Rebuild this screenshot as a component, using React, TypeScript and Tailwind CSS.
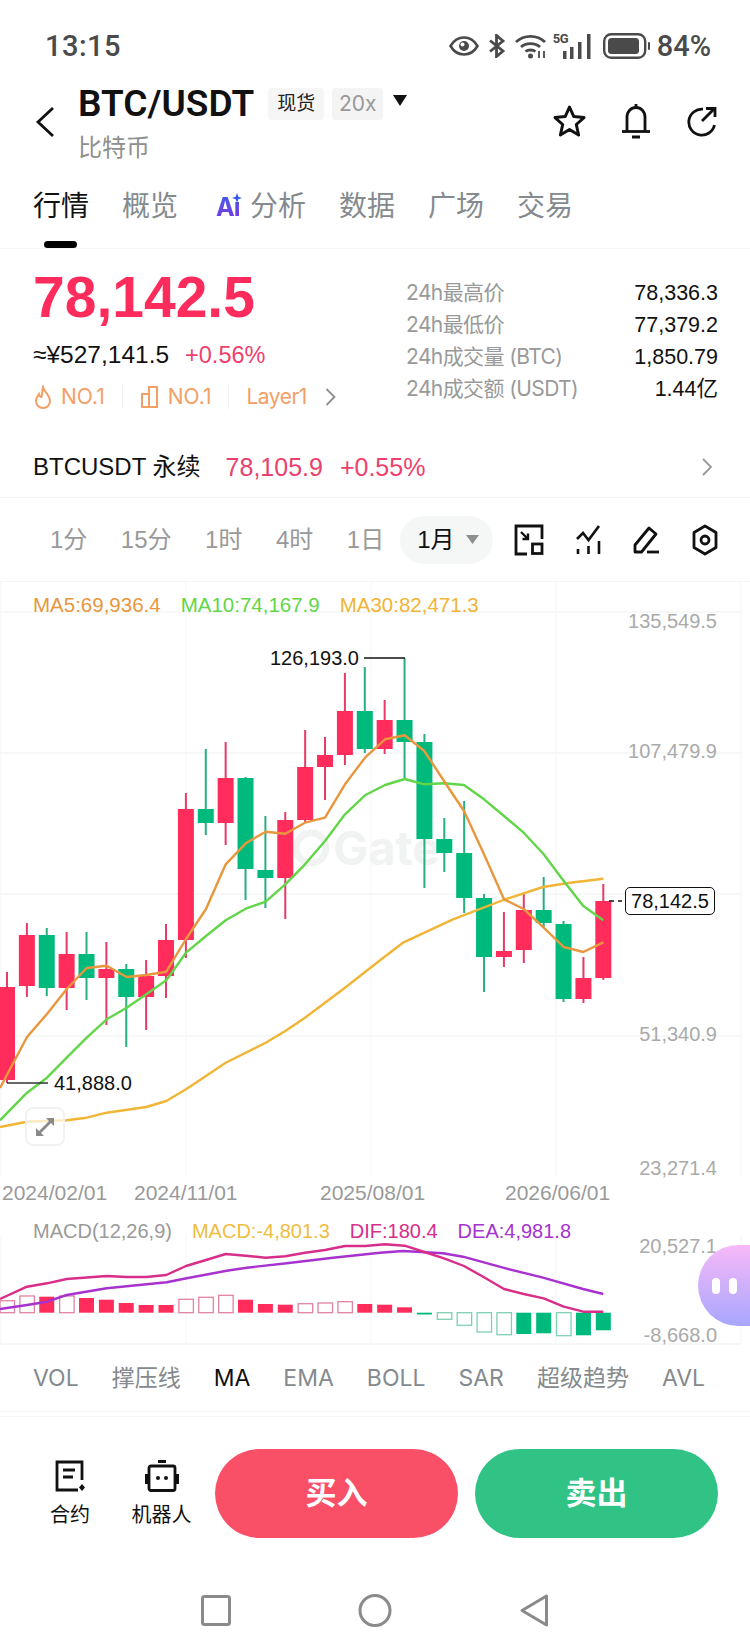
import React from 'react';

const RED = '#ff2c5c';
const GREEN = '#00b97c';

// [wickTop, bodyTop, bodyBottom, wickBottom, isGreen], read off in page pixels
const candles: [number, number, number, number, number][] = [
  [971, 986, 1079, 1082, 0],
  [922, 934, 985, 996, 0],
  [927, 934, 987, 995, 1],
  [931, 953, 987, 1009, 0],
  [931, 953, 977, 999, 1],
  [941, 968, 977, 1024, 0],
  [963, 968, 996, 1046, 1],
  [959, 975, 996, 1029, 0],
  [923, 939, 975, 997, 0],
  [792, 808, 939, 957, 0],
  [748, 808, 822, 834, 1],
  [741, 777, 822, 844, 0],
  [776, 777, 868, 899, 1],
  [815, 869, 877, 907, 1],
  [811, 819, 877, 918, 0],
  [729, 766, 819, 822, 0],
  [736, 754, 766, 799, 0],
  [672, 710, 754, 764, 0],
  [666, 710, 748, 752, 1],
  [699, 719, 748, 753, 0],
  [657, 719, 741, 777, 1],
  [733, 741, 838, 887, 1],
  [817, 838, 852, 871, 1],
  [800, 852, 897, 912, 1],
  [893, 897, 956, 991, 1],
  [911, 950, 956, 966, 0],
  [893, 909, 949, 962, 0],
  [876, 909, 922, 926, 1],
  [920, 923, 998, 1001, 1],
  [956, 977, 998, 1002, 0],
  [883, 900, 977, 979, 0],
];

const candleX = (i: number) => 7 + i * 19.877;

const ma5 = '0,1087 27,1036 47,1013 66.7,988 86.7,967 106.7,964.7 126.7,976 146.3,974 166.3,970.7 186,938 206,908 225.7,863.3 245.7,842.3 265.7,830.7 285.3,832.7 305,821.7 325,816.7 345,783.3 365,756.7 385,738.3 404.7,734.3 424.3,750 444,780 464,810 484,853.3 504,898.3 523.7,908 543.7,926.7 563.7,946 583.3,951 603.3,941.3';
const ma10 = '0,1119.3 27,1091.7 47,1076.7 66.7,1056.7 86.7,1036.7 106.7,1018.3 126.7,1006.7 146.3,993.3 166.3,979.3 186,951.7 206,935 225.7,919.3 245.7,907.7 265.7,900.7 285.3,883.3 305,863.3 325,840 345,813.3 365,794.3 385,784 404.7,778 424.3,783.3 444,782.3 464,784 484,798.3 504,815 523.7,831.7 543.7,853.3 563.7,880 583.3,905 603.3,919.3';
const ma30 = '0,1126 27,1120.7 66.7,1119.3 86.7,1116.7 106.7,1111.7 146.3,1106 166.3,1100 186,1088.3 206,1075 225.7,1061.7 265.7,1041.7 285.3,1030 305,1016.7 325,1001.7 345,986.7 380,959.3 403,941.7 453,918.3 503.3,899 543,886 570,881.7 603.3,877.7';
const dif = '0,1299 27,1286.7 47,1283.3 66.7,1279 106.7,1276 126.7,1277 146.3,1277 166.3,1275 186,1266 206,1260 225.7,1254 245.7,1255.7 265.7,1257.7 285.3,1256.3 305,1252.7 325,1250 345,1246 365,1246 385,1244.3 404.7,1245.7 424.3,1252 444,1258.3 464,1266 484,1277.3 504,1289 523.7,1294 543.7,1298.3 563.7,1306.7 583.3,1311.7 603.3,1311.7';
const dea = '0,1309 27,1305 47,1301.7 66.7,1295 106.7,1288.3 166.7,1282.3 186.7,1278.3 226.7,1270.7 246.7,1267.7 286.7,1263.3 333,1257.7 380,1252.7 403,1251 443,1253.3 463,1256.7 503,1267.7 543,1277.7 583,1289 603.3,1294';

// [edge y, filled] - the other edge is always the zero line
const macdBars: [number, number][] = [
  [1300.7, 0], [1296, 0], [1296.7, 1], [1296, 0], [1298, 1], [1299.7, 1], [1303, 1], [1305, 1], [1305, 1],
  [1299.3, 0], [1297.3, 0], [1295.3, 0], [1299.7, 1], [1304, 1], [1304.7, 1], [1303.7, 0], [1303, 0], [1301.7, 0],
  [1304, 1], [1304.7, 1], [1307.3, 1], [1314.5, 1], [1319.3, 0], [1325.3, 0], [1332, 0], [1334.7, 0], [1334, 1],
  [1333.3, 1], [1335.7, 0], [1335.3, 1], [1330.3, 1],
];
const ZERO = 1312.7;

function MainChart() {
  return (
    <svg className="absolute inset-0 w-[750px] h-[595px]" viewBox="0 581 750 595">
      {[611, 752, 893, 1035].map((y) => (
        <line key={y} x1="0" x2="741" y1={y} y2={y} stroke="#f3f4f5" strokeWidth="1.5" />
      ))}
      {[1, 186, 371, 556, 741].map((x) => (
        <line key={x} x1={x} x2={x} y1="581" y2="1176" stroke="#f5f6f7" strokeWidth="1.2" />
      ))}
      {/* watermark */}
      <circle cx="311" cy="847" r="15" fill="none" stroke="#f1f3f3" strokeWidth="7" />
      <text x="333" y="864" fontSize="47" fontWeight="700" fill="#f1f3f3" fontFamily="Inter, sans-serif">Gate</text>
      {candles.map(([wt, bt, bb, wb, g], i) => (
        <g key={i} fill={g ? GREEN : RED}>
          <rect x={candleX(i) - 1} y={wt} width="2" height={wb - wt} fill={g ? '#27b07f' : '#e83a66'} />
          <rect x={candleX(i) - 8} y={bt} width="16" height={bb - bt} />
        </g>
      ))}
      <polyline points={ma30} fill="none" stroke="#f0b536" strokeWidth="2.4" strokeLinejoin="round" />
      <polyline points={ma10} fill="none" stroke="#62d648" strokeWidth="2.4" strokeLinejoin="round" />
      <polyline points={ma5} fill="none" stroke="#e8973d" strokeWidth="2.4" strokeLinejoin="round" />
      <path d="M364 657H405" stroke="#111" strokeWidth="1.5" />
      <path d="M7 1082H48" stroke="#333" strokeWidth="1.5" />
      <path d="M609 900H622" stroke="#111" strokeWidth="1.5" strokeDasharray="5 4" />
    </svg>
  );
}

function MacdChart() {
  return (
    <svg className="absolute inset-0 w-[750px] h-[134px]" viewBox="0 1211 750 134">
      <line x1="0" x2="741" y1="1344" y2="1344" stroke="#f3f4f5" strokeWidth="1.5" />
      {[1, 186, 371, 556, 741].map((x) => (
        <line key={x} x1={x} x2={x} y1="1236" y2="1344" stroke="#f5f6f7" strokeWidth="1.2" />
      ))}
      {macdBars.map(([y, filled], i) => {
        const up = y < ZERO;
        const color = up ? RED : GREEN;
        const top = Math.min(y, ZERO);
        const h = Math.abs(y - ZERO);
        if (filled) return <rect key={i} x={candleX(i) - 7.5} y={top} width="15" height={h} fill={color} />;
        return (
          <rect key={i} x={candleX(i) - 7} y={top} width="14.5" height={h} fill="white" stroke={up ? '#e283a0' : '#7fd0b2'} strokeWidth="1.3" />
        );
      })}
      <polyline points={dea} fill="none" stroke="#a832cf" strokeWidth="2.4" strokeLinejoin="round" />
      <polyline points={dif} fill="none" stroke="#d82e8a" strokeWidth="2.4" strokeLinejoin="round" />
    </svg>
  );
}

function StatusIcons() {
  return (
    <div className="flex items-center text-[#4a4a4a]">
      {/* eye */}
      <svg width="30" height="20" viewBox="0 0 30 20" fill="none" stroke="currentColor" strokeWidth="2.6">
        <path d="M1.5 10C5 4 9.5 1.5 15 1.5S25 4 28.5 10C25 16 20.5 18.5 15 18.5S5 16 1.5 10Z" />
        <circle cx="15" cy="10" r="5" fill="currentColor" stroke="none" />
        <circle cx="13.5" cy="8.5" r="2" fill="white" stroke="none" />
      </svg>
      {/* bluetooth */}
      <svg className="ml-[9px]" width="18" height="24" viewBox="0 0 18 24" fill="none" stroke="currentColor" strokeWidth="2.8">
        <path d="M2 6.5L15 17L8.5 22.5V1.5L15 7L2 17.5" />
      </svg>
      {/* wifi */}
      <svg className="ml-[9px]" width="31" height="25" viewBox="0 0 31 25" fill="none" stroke="currentColor" strokeWidth="2.8">
        <path d="M1 8C9 0.5 22 0.5 30 8" />
        <path d="M6 13C11 8.5 20 8.5 25 13" />
        <path d="M10.5 17.5C13 15.5 18 15.5 20.5 17.5" />
        <circle cx="15.5" cy="22" r="2.5" fill="currentColor" stroke="none" />
        <path d="M24 17V24M29 17V24" strokeWidth="1.8" />
      </svg>
      {/* 5G + signal */}
      <div className="relative ml-[7px] w-[40px] h-[25px]">
        <span className="absolute left-0 top-[-2px] text-[13px] leading-[14px] font-bold font-['Roboto',sans-serif] tracking-[-0.5px]">5G</span>
        <svg className="absolute inset-0" width="40" height="25" viewBox="0 0 40 25" fill="currentColor">
          <rect x="10" y="17" width="3.5" height="8" />
          <rect x="17" y="13" width="3.5" height="12" />
          <rect x="25" y="8" width="3.5" height="17" />
          <rect x="34" y="0" width="3.5" height="25" />
        </svg>
      </div>
      {/* battery */}
      <svg className="ml-[10px]" width="47" height="26" viewBox="0 0 47 26" fill="none">
        <rect x="1.2" y="1.2" width="41" height="23.6" rx="7" stroke="currentColor" strokeWidth="2.4" />
        <rect x="5" y="5" width="31" height="16" rx="3.5" fill="currentColor" />
        <rect x="45" y="9" width="2" height="8" rx="1" fill="currentColor" />
      </svg>
      <span className="ml-[7px] text-[29px] leading-[32px] font-medium font-['Roboto',sans-serif]">84%</span>
    </div>
  );
}

function AiIcon() {
  return (
    <span className="relative w-[26px] h-[26px]">
      <span className="absolute left-0 bottom-[-2px] text-[25px] leading-[28px] font-bold bg-gradient-to-b from-[#2f5bea] to-[#7c2fe0] bg-clip-text text-transparent tracking-[-1px]">Aı</span>
      <svg className="absolute right-0 top-0" width="10" height="10" viewBox="0 0 10 10" fill="#2f5bea">
        <path d="M5 0L6.3 3.7L10 5L6.3 6.3L5 10L3.7 6.3L0 5L3.7 3.7Z" />
      </svg>
    </span>
  );
}

export default function App() {
  return (
    <div className="relative w-[750px] h-[1650px] overflow-hidden bg-white text-[#111] font-['Inter','Noto_Sans_CJK_SC',sans-serif]">
      {/* status bar */}
      <div className="flex items-center justify-between h-[84px] pt-[8px] pl-[45px] pr-[39px]">
        <span className="text-[29px] leading-[32px] font-medium text-[#4a4a4a] tracking-[0.5px] font-['Roboto',sans-serif]">13:15</span>
        <StatusIcons />
      </div>

      {/* header */}
      <div className="flex h-[90px] pl-[35px] pr-[33px]">
        <svg className="mt-[22px]" width="20" height="32" viewBox="0 0 20 32" fill="none" stroke="#111" strokeWidth="2.8">
          <path d="M18 2L3 16L18 30" />
        </svg>
        <div className="ml-[23px]">
          <div className="flex items-center h-[40px]">
            <span className="text-[37px] leading-[40px] font-semibold font-['Roboto',sans-serif]">BTC/USDT</span>
            <span className="ml-[14px] flex items-center justify-center w-[56px] h-[32px] rounded-[4px] bg-[#f6f6f6] text-[19px] text-[#222]">现货</span>
            <span className="ml-[8px] flex items-center justify-center w-[51px] h-[32px] rounded-[4px] bg-[#f4f4f4] text-[21px] text-[#999]">20x</span>
            <svg className="ml-[10px] mb-[8px]" width="14" height="11" viewBox="0 0 14 11" fill="#111"><path d="M0 0H14L7 11Z" /></svg>
          </div>
          <div className="mt-[12px] text-[24px] leading-[24px] text-[#8f8f8f]">比特币</div>
        </div>
        <div className="ml-auto flex items-center gap-[34px] pb-[16px]">
          <svg width="35" height="34" viewBox="0 0 35 34" fill="none" stroke="#111" strokeWidth="3" strokeLinejoin="round">
            <path d="M17.5 3L21.8 12.6L32 13.6L24.3 20.5L26.6 31L17.5 25.5L8.4 31L10.7 20.5L3 13.6L13.2 12.6Z" />
          </svg>
          <svg width="30" height="36" viewBox="0 0 30 36" fill="none" stroke="#111" strokeWidth="2.8">
            <path d="M6 28V14C6 8.5 10 4.5 15 4.5S24 8.5 24 14V28" />
            <path d="M1 28.5H29" />
            <path d="M15 1V4" />
            <path d="M11 34H19" strokeWidth="3" />
          </svg>
          <svg width="32" height="31" viewBox="0 0 32 31" fill="none" stroke="#111" strokeWidth="2.8">
            <path d="M18 3.2A13 13 0 1 0 29.5 19" />
            <path d="M17 15L29 3" />
            <path d="M21 2.5H30V11" />
          </svg>
        </div>
      </div>

      {/* tabs */}
      <div className="flex items-start gap-[33px] h-[75px] pl-[33px] pt-[14px] border-b-[1.5px] border-[#f3f4f5] text-[28px] leading-[36px] text-[#858a8e]">
        <div className="relative text-[#111]">
          行情
          <div className="absolute left-[11px] top-[53px] w-[33px] h-[7px] rounded-full bg-black" />
        </div>
        <div>概览</div>
        <div className="flex items-center gap-[8px] h-[36px] ml-[5px]">
          <AiIcon />
          <span>分析</span>
        </div>
        <div>数据</div>
        <div>广场</div>
        <div>交易</div>
      </div>

      {/* price block */}
      <div className="flex h-[183px]">
        <div className="w-[406px] pl-[33px] pt-[18px]">
          <div className="text-[57px] leading-[60px] font-bold text-[#fe2c5c] font-['Liberation_Sans',sans-serif]">78,142.5</div>
          <div className="flex items-center mt-[13px] leading-[30px] font-['Liberation_Sans',sans-serif]">
            <span className="text-[24.5px]">≈¥527,141.5</span>
            <span className="ml-[16px] text-[23.5px] text-[#f0406d]">+0.56%</span>
          </div>
          <div className="flex items-center mt-[13px] text-[21px] leading-[28px] text-[#f2a066]">
            <svg width="16" height="24" viewBox="0 0 16 24" fill="none" stroke="#f2a066" strokeWidth="2" className="ml-[2px]">
              <path d="M8 2C9 7 15 10 15 16C15 20 12 23 8 23S1 20 1 16C1 12.5 3 10.5 4 9C4.5 11 5.5 12 6.5 12C7.5 9 7 5 8 2Z" />
            </svg>
            <span className="ml-[10px]">NO.1</span>
            <div className="ml-[17px] w-px h-[24px] bg-[#f5f0ec]" />
            <svg width="17" height="22" viewBox="0 0 17 22" fill="none" stroke="#f2a066" strokeWidth="2" className="ml-[18px]">
              <path d="M1 21V8H8V21H1ZM8 21V1H16V21H8Z" />
            </svg>
            <span className="ml-[10px]">NO.1</span>
            <div className="ml-[17px] w-px h-[24px] bg-[#f5f0ec]" />
            <span className="ml-[17px] tracking-[-0.5px]">Layer1</span>
            <svg width="11" height="18" viewBox="0 0 11 18" fill="none" stroke="#8f8f8f" strokeWidth="1.8" className="ml-[18px]">
              <path d="M1.5 1L9.5 9L1.5 17" />
            </svg>
          </div>
        </div>
        <div className="flex-1 pt-[28px] pr-[32px] text-[21px] leading-[32px]">
          {[
            ['24h最高价', '78,336.3'],
            ['24h最低价', '77,379.2'],
            ['24h成交量 (BTC)', '1,850.79'],
            ['24h成交额 (USDT)', '1.44亿'],
          ].map(([label, value]) => (
            <div key={label} className="flex justify-between h-[32px]">
              <span className="text-[#999] tracking-[-0.6px]">{label}</span>
              <span className="text-[21.5px] font-['Liberation_Sans','Noto_Sans_CJK_SC',sans-serif]">{value}</span>
            </div>
          ))}
        </div>
      </div>

      {/* perpetual row */}
      <div className="flex items-center h-[66px] pt-[4px] pl-[33px] pr-[38px] border-b-[1.5px] border-[#f3f4f5] leading-[30px] font-['Liberation_Sans','Noto_Sans_CJK_SC',sans-serif]">
        <span className="text-[24px]">BTCUSDT 永续</span>
        <span className="ml-[25px] text-[25px] text-[#e8416d]">78,105.9</span>
        <span className="ml-[17px] text-[25px] text-[#f0406d]">+0.55%</span>
        <svg className="ml-auto" width="10" height="18" viewBox="0 0 10 18" fill="none" stroke="#999" strokeWidth="1.8">
          <path d="M1 1L9 9L1 17" />
        </svg>
      </div>

      {/* time frames */}
      <div className="flex items-center h-[83px] pl-[50px] pr-[32px] text-[24px] leading-[30px] text-[#999] font-['Liberation_Sans','Noto_Sans_CJK_SC',sans-serif]">
        <div className="flex gap-[33.5px]">
          <span>1分</span>
          <span>15分</span>
          <span>1时</span>
          <span>4时</span>
          <span>1日</span>
        </div>
        <div className="flex items-center ml-[16px] w-[93px] h-[48px] pl-[17px] rounded-full bg-[#f5f6f6] text-[#111]">
          <span>1月</span>
          <svg className="ml-[11px]" width="13" height="9" viewBox="0 0 13 9" fill="#8f8f8f"><path d="M0 0H13L6.5 9Z" /></svg>
        </div>
        <div className="ml-auto flex items-center gap-[32px]">
          <svg width="30" height="32" viewBox="0 0 30 32" fill="none" stroke="#111" strokeWidth="2.8">
            <path d="M13 30H2V2H28V15" />
            <path d="M7 8L14 15M14 9.5V15H8.5" strokeWidth="2.4" />
            <rect x="18.5" y="20" width="9.5" height="9.5" />
          </svg>
          <svg width="25" height="30" viewBox="0 0 25 30" fill="none" stroke="#111" strokeWidth="2.6">
            <path d="M1 14L7 8L12.5 15L23 1" />
            <path d="M2 29V24M12.5 29V21M23 29V16" />
          </svg>
          <svg width="27" height="30" viewBox="0 0 27 30" fill="none" stroke="#111" strokeWidth="2.8" strokeLinejoin="round">
            <path d="M2 27V20L16 3L23 9L8.5 27H2Z" />
            <path d="M14 27H26" />
          </svg>
          <svg width="26" height="32" viewBox="0 0 26 32" fill="none" stroke="#111" strokeWidth="2.8" strokeLinejoin="round">
            <path d="M13 2L24 8.5V23.5L13 30L2 23.5V8.5Z" />
            <circle cx="13" cy="16" r="4" />
          </svg>
        </div>
      </div>

      {/* main chart */}
      <div className="relative h-[595px] border-t-[1.5px] border-[#f3f4f5] text-[20px] leading-[26px] font-['Liberation_Sans',sans-serif]">
        <MainChart />
        <div className="relative flex gap-[20px] pl-[33px] pt-[10px] text-[20.5px]">
          <span className="text-[#e8973d]">MA5:69,936.4</span>
          <span className="text-[#62d648]">MA10:74,167.9</span>
          <span className="text-[#f0b536]">MA30:82,471.3</span>
        </div>
        <span className="absolute right-[33px] top-[26px] text-[#aaa]">135,549.5</span>
        <span className="absolute right-[33px] top-[156px] text-[#aaa]">107,479.9</span>
        <span className="absolute right-[33px] top-[439px] text-[#aaa]">51,340.9</span>
        <span className="absolute right-[33px] top-[573px] text-[#aaa]">23,271.4</span>
        <span className="absolute left-[270px] top-[63px]">126,193.0</span>
        <span className="absolute left-[54px] top-[488px]">41,888.0</span>
        <span className="absolute left-[625px] top-[305px] flex items-center justify-center w-[90px] h-[28px] rounded-[5px] border-[1.5px] border-[#111] bg-white">78,142.5</span>
        <div className="absolute left-[25px] top-[525px] flex items-center justify-center w-[40px] h-[39px] rounded-[8px] border-2 border-[#f2f2f2] bg-white/70">
          <svg width="20" height="20" viewBox="0 0 20 20" fill="#8a8a8a">
            <path d="M11 1H19V9L16 6L6 16L9 19H1V11L4 14L14 4Z" />
          </svg>
        </div>
      </div>

      {/* date axis */}
      <div className="relative h-[35px] text-[21px] leading-[34px] text-[#999] font-['Liberation_Sans',sans-serif]">
        <span className="absolute left-[2px]">2024/02/01</span>
        <span className="absolute left-[134px]">2024/11/01</span>
        <span className="absolute left-[320px]">2025/08/01</span>
        <span className="absolute left-[505px]">2026/06/01</span>
      </div>

      {/* MACD */}
      <div className="relative h-[134px] text-[20px] leading-[26px] font-['Liberation_Sans',sans-serif]">
        <MacdChart />
        <div className="relative flex gap-[20px] pl-[33px] pt-[7px]">
          <span className="text-[#9a9a9a]">MACD(12,26,9)</span>
          <span className="text-[#f0bd40]">MACD:-4,801.3</span>
          <span className="text-[#d82e8a]">DIF:180.4</span>
          <span className="text-[#a832cf]">DEA:4,981.8</span>
        </div>
        <span className="absolute right-[33px] top-[22px] text-[#aaa]">20,527.1</span>
        <span className="absolute right-[33px] top-[111px] text-[#aaa]">-8,668.0</span>
        <div className="absolute right-0 top-[34px] flex items-center gap-[9px] w-[52px] h-[81px] pl-[14px] rounded-l-full bg-gradient-to-b from-[#f7b8f8] to-[#a7a6fd]">
          <div className="w-[8px] h-[16px] rounded-full bg-white" />
          <div className="w-[8px] h-[16px] rounded-full bg-white" />
        </div>
      </div>

      {/* indicators */}
      <div className="flex items-center gap-[33px] h-[67px] pl-[33px] text-[23px] leading-[30px] text-[#858a8e] whitespace-nowrap border-b-[1.5px] border-[#f3f4f5]">
        <span>VOL</span>
        <span>撑压线</span>
        <span className="text-[#111]">MA</span>
        <span>EMA</span>
        <span>BOLL</span>
        <span>SAR</span>
        <span>超级趋势</span>
        <span>AVL</span>
      </div>

      {/* bottom bar */}
      <div className="flex h-[158px] pl-[50px] pr-[32px] pt-[32px] border-t-[1.5px] border-[#f3f4f5] mt-[4px]">
        <div className="flex flex-col items-center w-[40px] pt-[11px]">
          <svg width="32" height="32" viewBox="0 0 32 32" fill="none" stroke="#111" strokeWidth="2.8">
            <path d="M28 20V2H3V30H24" />
            <path d="M9 10H21M9 17H19" strokeWidth="3" />
            <path d="M28 24L31 27.5L28 31L25 27.5Z" fill="#111" stroke="none" />
          </svg>
          <span className="mt-[10px] text-[20px] leading-[26px] whitespace-nowrap">合约</span>
        </div>
        <div className="flex flex-col items-center w-[61px] ml-[41px] pt-[11px]">
          <svg width="34" height="32" viewBox="0 0 34 32" fill="none" stroke="#111" strokeWidth="2.8">
            <path d="M13 1.5H21" strokeWidth="3" />
            <rect x="4" y="6" width="26" height="24.5" rx="2" />
            <rect x="0" y="14" width="3" height="10" fill="#111" stroke="none" />
            <rect x="31" y="14" width="3" height="10" fill="#111" stroke="none" />
            <circle cx="13" cy="18" r="2" fill="#111" stroke="none" />
            <circle cx="21" cy="18" r="2" fill="#111" stroke="none" />
          </svg>
          <span className="mt-[10px] text-[20px] leading-[26px] whitespace-nowrap">机器人</span>
        </div>
        <button className="flex items-center justify-center w-[243px] h-[89px] ml-[23px] rounded-full bg-[#f95068] text-white text-[31px] font-bold">买入</button>
        <button className="flex items-center justify-center w-[243px] h-[89px] ml-[17px] rounded-full bg-[#30c385] text-white text-[31px] font-bold">卖出</button>
      </div>

      {/* android nav */}
      <div className="flex items-center h-[72px] pl-[201px]">
        <svg width="30" height="31" viewBox="0 0 30 31" fill="none" stroke="#8a8a8a" strokeWidth="3" strokeLinejoin="round">
          <rect x="1.5" y="1.5" width="27" height="28" rx="2" />
        </svg>
        <svg className="ml-[127px]" width="34" height="33" viewBox="0 0 34 33" fill="none" stroke="#8a8a8a" strokeWidth="3">
          <ellipse cx="17" cy="16.5" rx="15" ry="15" />
        </svg>
        <svg className="ml-[128px]" width="29" height="33" viewBox="0 0 29 33" fill="none" stroke="#8a8a8a" strokeWidth="3" strokeLinejoin="round">
          <path d="M26.5 2V31L2 16.5Z" />
        </svg>
      </div>
    </div>
  );
}
